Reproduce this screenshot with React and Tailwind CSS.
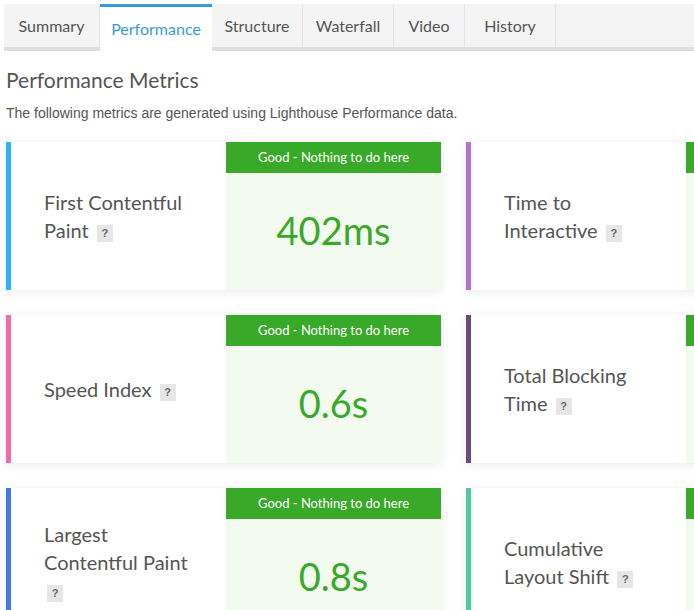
const tabs = [
  { name: "Summary", w: "w-[96px]" },
  { name: "Performance", w: "w-[112px]", active: true },
  { name: "Structure", w: "w-[91px]" },
  { name: "Waterfall", w: "w-[91px]" },
  { name: "Video", w: "w-[71px]" },
  { name: "History", w: "w-[91px]" },
];

const metrics = [
  { label: "First Contentful Paint", value: "402ms", bar: "bg-[#29b6f6]" },
  { label: "Time to Interactive", value: "0.5s", bar: "bg-[#b36fd6]" },
  { label: "Speed Index", value: "0.6s", bar: "bg-[#f06ba8]" },
  { label: "Total Blocking Time", value: "0ms", bar: "bg-[#6b4a7c]" },
  { label: "Largest Contentful Paint", value: "0.8s", bar: "bg-[#3f7be0]" },
  { label: "Cumulative Layout Shift", value: "0", bar: "bg-[#4ec9a0]" },
];

function Help() {
  return (
    <span className="ml-[3px] inline-block h-[17px] w-[16px] bg-[#e6e6e6] text-center align-[1px] font-['Liberation_Sans',sans-serif] text-[11px] leading-[17px] font-bold text-[#666]">
      ?
    </span>
  );
}

function MetricCard({ label, value, bar }) {
  return (
    <div className="flex h-[148px] w-[435px] bg-white shadow-[0_2px_10px_rgba(0,0,0,0.08)]">
      <div className={`w-[5px] shrink-0 ${bar}`} />
      <div className="flex w-[215px] shrink-0 items-center pl-[33px] pr-[26px]">
        <p className="text-[20px] leading-[28px] text-[#555]">
          {label} <Help />
        </p>
      </div>
      <div className="flex flex-1 flex-col bg-[#f3fbf1]">
        <div className="flex h-[31px] items-center justify-center bg-[#38a928] text-[13px] text-white">
          Good - Nothing to do here
        </div>
        <div className="flex flex-1 items-center justify-center pb-[2px] text-[38px] text-[#38a928]">
          {value}
        </div>
      </div>
    </div>
  );
}

export default function App() {
  return (
    <div className="h-[610px] w-[694px] overflow-hidden bg-white font-['Lato',sans-serif]">
      <div className="pl-[4px] pt-[4px]">
        <div className="flex w-[900px] border-b-[4px] border-[#dedede] bg-[#f4f4f4]">
          {tabs.map((t) => (
            <div
              key={t.name}
              className={
                t.active
                  ? `${t.w} -mb-[4px] flex h-[47px] shrink-0 items-center justify-center border-t-[3px] border-[#3a9ad9] bg-white pb-[1px] text-[16px] text-[#3a9ad9]`
                  : `${t.w} flex h-[43px] shrink-0 items-center justify-center border-r border-[#e4e4e4] text-[16px] text-[#555]`
              }
            >
              {t.name}
            </div>
          ))}
        </div>
      </div>

      <div className="px-[6px]">
        <h1 className="mt-[15px] text-[21px] leading-[28px] text-[#555]">
          Performance Metrics
        </h1>
        <p className="mt-[9px] font-['Liberation_Sans',sans-serif] text-[14px] text-[#555]">
          The following metrics are generated using Lighthouse Performance data.
        </p>

        <div className="mt-[18px] grid w-[895px] grid-cols-[435px_435px] gap-[25px]">
          {metrics.map((m) => (
            <MetricCard key={m.label} {...m} />
          ))}
        </div>
      </div>
    </div>
  );
}
